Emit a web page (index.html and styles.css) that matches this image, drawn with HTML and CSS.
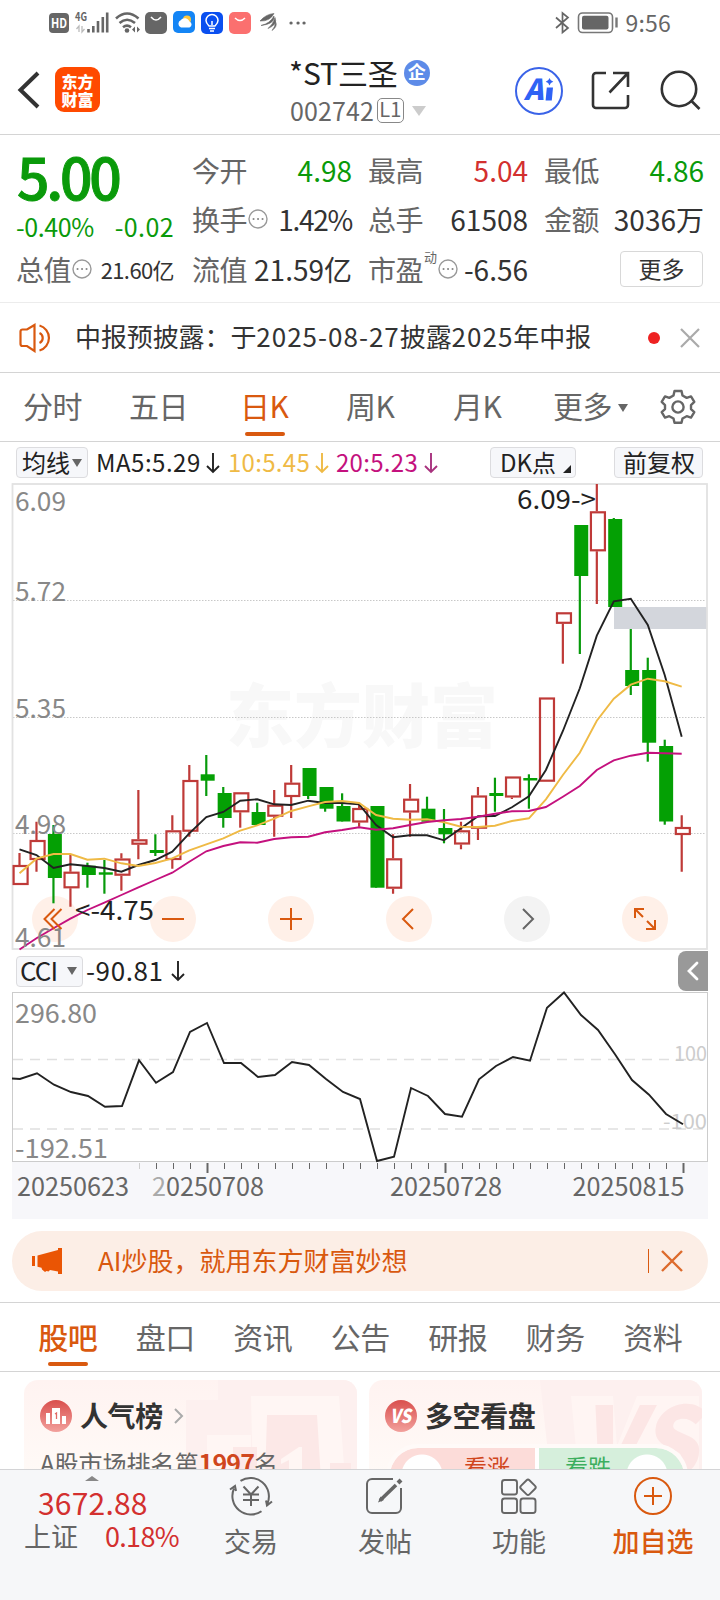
FILE: index.html
```html
<!DOCTYPE html>
<html lang="zh-CN">
<head>
<meta charset="utf-8">
<title>*ST三圣 002742</title>
<link rel="stylesheet" href="styles.css">
</head>
<body>
<div class="app">
  <div class="status">
    <svg class="status-icons" width="270" height="46" viewBox="48 0 270 46">
      <rect x="49" y="13" width="20" height="20" rx="4" fill="#666"/>
      <text x="51" y="28" font-size="13" font-weight="700" fill="#fff" textLength="16" lengthAdjust="spacingAndGlyphs">HD</text>
      <text x="75" y="21" font-size="12" font-weight="700" fill="#666" textLength="12" lengthAdjust="spacingAndGlyphs">4G</text>
      <path d="M79 32V26l-2.500 3M82 26v6l2.500-3" fill="none" stroke="#bbb" stroke-width="1.300"/>
      <path d="M88.500 29v3.500M93.300 26v6.500M98 21v11.500M102.800 17v15.500M107.200 12.500v20" stroke="#666" stroke-width="2.600"/>
      <path d="M116 18.500Q127 8.500 138.500 18.500M119.500 23Q127 16.500 135 23M123 27.200Q127 24 131 27.200" fill="none" stroke="#666" stroke-width="2.600"/>
      <circle cx="127" cy="30.500" r="2.300" fill="#666"/>
      <path d="M132 29.500l3-3v6zM140 29.500l-3-3v6z" fill="#666"/>
      <rect x="145" y="12" width="22" height="22" rx="5" fill="#666"/>
      <path d="M151 17q5 6 10 0" fill="none" stroke="#fff" stroke-width="1.500"/>
      <rect x="173" y="11" width="22" height="22" rx="5" fill="#1485f5"/>
      <circle cx="187" cy="19.500" r="4" fill="#ffc83d"/>
      <path d="M181 27.500a4 4 0 0 1 0-7.500 5 5 0 0 1 8.500 1.500 3.200 3.200 0 0 1 0 6z" fill="#fff"/>
      <rect x="201" y="12" width="22" height="22" rx="5" fill="#0a4ff0"/>
      <path d="M209 26q-3-3-3-5.500a6 6 0 0 1 12 0q0 2.500-3 5.500zM209 28.500h6M210 31h4M212 25v-4" fill="none" stroke="#fff" stroke-width="1.500"/>
      <rect x="229" y="12" width="22" height="22" rx="5" fill="#fb706f"/>
      <path d="M235 18q5 5 10 0" fill="none" stroke="#fff" stroke-width="1.500"/>
      <path d="M260 21q6-7 14-7.500-4 8-14 7.500zM261 25.500q9-2 13-9.500 1 8-13 9.500zM268 28.500q5-4 7-11 3 7-7 11zM272 30.500q3.500-4 3.500-9 2.500 5-3.500 9z" fill="#666" stroke="#666" stroke-width=".6"/>
      <path d="M291 23h.1M298 23h.1M304 23h.1" stroke="#666" stroke-width="3.200" stroke-linecap="round"/>
    </svg>
    <div class="status-right">
      <svg width="66" height="24" viewBox="553 11 66 24">
        <path d="M556 17.500l12 10.500-5.500 4.500V13l5.500 4.500L556 28" fill="none" stroke="#666" stroke-width="1.700"/>
        <rect x="578.500" y="13" width="34" height="19.500" rx="4" fill="none" stroke="#777" stroke-width="1.600"/>
        <rect x="582" y="15.800" width="26.500" height="13.600" rx="2" fill="#666"/>
        <path d="M616.500 17.500v10" stroke="#777" stroke-width="2.400"/>
      </svg>
      <span class="clock">9:56</span>
    </div>
  </div>

  <header class="header">
    <svg class="back" width="24" height="40" viewBox="0 0 24 40"><path d="M22 3L4.500 20 22 37" fill="none" stroke="#333" stroke-width="4"/></svg>
    <div class="logo"><span>东方</span><span>财富</span></div>
    <div class="title">
      <div class="name"><span>*ST三圣</span><b class="badge">企</b></div>
      <div class="code"><span>002742</span><span class="level">L1</span><i class="caret-light"></i></div>
    </div>
    <div class="actions">
      <svg width="48" height="48" viewBox="0 0 48 48">
        <circle cx="24" cy="24" r="23" fill="none" stroke="#3a63e8" stroke-width="2"/>
        <text class="ai" x="9" y="33" textLength="20">A</text>
        <path d="M31.800 20.500h6.200l-1.200 13h-6.200z" fill="#2f62f5"/>
        <path d="M34.500 11q.8 3 3.800 3.800-3 .8-3.800 3.800-.8-3-3.800-3.800 3-.8 3.800-3.800z" fill="#2f62f5"/>
      </svg>
      <svg width="40" height="40" viewBox="0 0 40 40" fill="none" stroke="#333" stroke-width="2.600"><path d="M15 2H5a3 3 0 0 0-3 3v29a3 3 0 0 0 3 3h29a3 3 0 0 0 3-3V24M22 2h15v14M37 2L18.500 21.500"/></svg>
      <svg width="42" height="42" viewBox="0 0 42 42" fill="none" stroke="#333" stroke-width="2.600"><circle cx="20" cy="19" r="17.200"/><path d="M32 30.500l8.500 8.500"/></svg>
    </div>
  </header>

  <section class="quote">
    <div class="last">
      <div class="price">5.00</div>
      <div class="change"><span>-0.40%</span><span class="diff">-0.02</span></div>
      <div class="cell small"><span class="k">总值<svg class="info" viewBox="0 0 20 20"><use href="#info"/></svg></span><span class="v">21.60亿</span></div>
    </div>
    <div class="grid">
      <div class="cell"><span class="k">今开</span><span class="v down">4.98</span></div>
      <div class="cell"><span class="k">最高</span><span class="v up">5.04</span></div>
      <div class="cell"><span class="k">最低</span><span class="v down">4.86</span></div>
      <div class="cell"><span class="k">换手<svg class="info" viewBox="0 0 20 20"><g id="info"><circle cx="10" cy="10" r="9" fill="none" stroke="#999" stroke-width="1.400"/><path d="M5.500 10h.1M10 10h.1M14.500 10h.1" stroke="#888" stroke-width="2" stroke-linecap="round"/></g></svg></span><span class="v tight">1.42%</span></div>
      <div class="cell"><span class="k">总手</span><span class="v">61508</span></div>
      <div class="cell"><span class="k">金额</span><span class="v">3036万</span></div>
      <div class="cell"><span class="k">流值</span><span class="v">21.59亿</span></div>
      <div class="cell"><span class="k">市盈<sup>动</sup><svg class="info" viewBox="0 0 20 20"><use href="#info"/></svg></span><span class="v">-6.56</span></div>
      <div class="cell end"><button class="more">更多</button></div>
    </div>
  </section>

  <section class="notice">
    <svg width="34" height="30" viewBox="0 0 34 30" fill="none" stroke="#d9590f" stroke-width="2.200"><path d="M1.500 8.500a2 2 0 0 1 2-2h4.500L15.500 2v26L8 23H3.500a2 2 0 0 1-2-2zM20.500 10a5.500 5.500 0 0 1 0 10M20.500 2.500a13 13 0 0 1 0 25"/></svg>
    <p>中报预披露：于<span class="num">2025-08-27</span>披露<span class="num">2025</span>年中报</p>
    <i class="dot"></i>
    <svg width="20" height="20" viewBox="0 0 20 20"><path d="M1 1l18 18M19 1L1 19" stroke="#aaa" stroke-width="2.200"/></svg>
  </section>

  <nav class="periods">
    <span class="p1">分时</span><span class="p2">五日</span><span class="p3 on">日K</span><span class="p4">周K</span><span class="p5">月K</span><span class="p6">更多<i class="caret"></i></span>
    <svg width="36" height="36" viewBox="-18 -18 36 36" fill="none" stroke="#666" stroke-width="2.400" stroke-linejoin="round"><circle r="5.600"/><path d="M-3.500-16h7l1 4.500 4.200 2.400 4.300-1.500 3.300 5.500-3.300 3.200v4l3.300 3-3.300 5.500-4.300-1.400-4.200 2.300-1 4.300h-7l-1-4.300-4.200-2.300-4.300 1.400-3.300-5.500 3.300-3v-4l-3.300-3.200 3.300-5.500 4.300 1.500 4.200-2.400z"/></svg>
  </nav>

  <div class="ma">
    <span class="pill ma-type">均线<i class="caret"></i></span>
    <span class="ma5">MA5:5.29</span><svg class="arrow a5" viewBox="0 0 14 22"><path d="M7 1v19M1 14l6 6 6-6"/></svg>
    <span class="ma10">10:5.45</span><svg class="arrow a10" viewBox="0 0 14 22"><path d="M7 1v19M1 14l6 6 6-6"/></svg>
    <span class="ma20">20:5.23</span><svg class="arrow a20" viewBox="0 0 14 22"><path d="M7 1v19M1 14l6 6 6-6"/></svg>
    <span class="pill dk">DK点<i class="corner"></i></span>
    <span class="pill fq">前复权</span>
  </div>

  <svg id="kline" class="kline" width="720" height="468" viewBox="0 483 720 468"></svg>

  <div class="cci-bar">
    <span class="pill">CCI<i class="caret"></i></span>
    <span class="cci-value">-90.81</span><svg class="arrow" viewBox="0 0 14 22"><path d="M7 1v19M1 14l6 6 6-6"/></svg>
    <span class="fold"><svg width="12" height="20" viewBox="0 0 12 20"><path d="M10 2L2 10l8 8" fill="none" stroke="#fff" stroke-width="2.800" stroke-linecap="round"/></svg></span>
  </div>

  <svg id="cci" class="cci" width="720" height="229" viewBox="0 991 720 229"></svg>

  <div class="banner">
    <svg width="32" height="28" viewBox="0 0 32 28" fill="#ea5504"><path d="M1 9h3v10H1zM6.500 8.500L27 3V1h4v26h-4v-2.500l-8-1.500-1.500 1.500-2-.5-1.500 1-3-2.500-.5-1.700-4-1z"/></svg>
    <p>AI炒股，就用东方财富妙想</p>
    <i class="bar"></i>
    <svg width="22" height="22" viewBox="0 0 22 22"><path d="M1 1l20 20M21 1L1 21" stroke="#dd6a2c" stroke-width="2.400"/></svg>
  </div>

  <nav class="sections">
    <span class="on">股吧</span><span>盘口</span><span>资讯</span><span>公告</span><span>研报</span><span>财务</span><span>资料</span>
  </nav>

  <main class="cards">
    <article class="card">
      <svg class="deco" width="333" height="100" viewBox="0 0 333 100">
        <path d="M194 0h139v100H162V20h32z" fill="#fdf0ef"/><path d="M227 16h88l6 84h-92z" fill="#fff6f4"/><path d="M183 55h44v45h-44z" fill="#fff6f4"/>
        <path d="M243 35h50l4 65h-56z" fill="#fce8e7"/><path d="M209 67h24v33h-24zM306 83h21v17h-21z" fill="#fce8e7"/><path d="M257 79l18-12h3v33h-13V80l-8 4z" fill="#fff6f4"/>
      </svg>
      <div class="card-head">
        <svg width="32" height="32" viewBox="0 0 32 32"><circle cx="16" cy="16" r="16" fill="url(#red)"/><path d="M6 13h4v11H6zM12 8h8v16h-8zM22 16h4v8h-4z" fill="#fff"/><path d="M15 14l1.500-1v6" stroke="#e06a66" fill="none" stroke-width="1.300"/></svg>
        <h3>人气榜</h3>
        <svg width="10" height="16" viewBox="0 0 10 16"><path d="M1 1l7 7-7 7" fill="none" stroke="#aaa" stroke-width="2"/></svg>
      </div>
      <p class="rank">A股市场排名第<b>1997</b>名</p>
    </article>
    <article class="card">
      <svg class="deco" width="333" height="100" viewBox="0 0 333 100">
        <defs><linearGradient id="red" x2="0" y2="1"><stop stop-color="#d94f4d"/><stop offset="1" stop-color="#f2a09c"/></linearGradient></defs>
        <path d="M171 0h162v100H182z" fill="#fdf0ef"/>
        <path d="M202 16h42l4 50 20-50h62v84H210z" fill="#fff5f3"/>
        <text class="vs-bg" x="210" y="98" textLength="118" lengthAdjust="spacingAndGlyphs">VS</text>
      </svg>
      <div class="card-head">
        <svg width="32" height="32" viewBox="0 0 32 32"><circle cx="16" cy="16" r="16" fill="url(#red)"/><text class="vs" x="5" y="23" textLength="21" lengthAdjust="spacingAndGlyphs">VS</text></svg>
        <h3>多空看盘</h3>
      </div>
      <div class="vote"><span class="bull">看涨</span><span class="bear">看跌</span></div>
    </article>
  </main>

  <footer class="tabbar">
    <div class="index">
      <i class="caret-up"></i>
      <div class="points">3672.88</div>
      <div class="index-row"><span>上证</span><span class="up">0.18%</span></div>
    </div>
    <div class="tab"><svg width="44" height="40" viewBox="-22 -20 44 40" fill="none" stroke="#666" stroke-width="2"><path d="M-10.500-15.200A18.500 18.500 0 0 1 16.500 7.500M10.500 15.200A18.500 18.500 0 0 1-17-7.500M-21-6.500l5-3.500 1 5M21 5.500l-5 4-1-5M-7.500-9.500l7.500 8 7.500-8M0-1.500V10M-8-1.500H8M-8 4H8"/></svg><span>交易</span></div>
    <div class="tab"><svg width="40" height="40" viewBox="0 0 40 40" fill="none" stroke="#666" stroke-width="2"><path d="M28 3H7a5 5 0 0 0-5 5v24a5 5 0 0 0 5 5h24a5 5 0 0 0 5-5V12"/><path d="M15 24.500l16-15.500" stroke-width="3.600"/><path d="M33 7l3-3" stroke-width="4"/><path d="M15.500 20.500l-2.500 6 6-2.500z" fill="#666" stroke="none"/></svg><span>发帖</span></div>
    <div class="tab"><svg width="40" height="40" viewBox="0 0 40 40" fill="none" stroke="#666" stroke-width="1.900"><rect x="3" y="4" width="15" height="14.500" rx="2.500"/><rect x="3" y="22.500" width="15" height="14.500" rx="2.500"/><rect x="21.500" y="22.500" width="15" height="14.500" rx="2.500"/><rect x="23" y="5.300" width="12" height="12" rx="2" transform="rotate(45 29 11.300)"/></svg><span>功能</span></div>
    <div class="tab add"><svg width="40" height="40" viewBox="0 0 40 40" fill="none" stroke="#d9590f" stroke-width="2"><circle cx="20" cy="20" r="18"/><path d="M11 20h18M20 11v18"/></svg><span>加自选</span></div>
  </footer>
</div>
<script src="chart.js"></script>
</body>
</html>
```
FILE: styles.css
```css
* { box-sizing: border-box; }
body, p, h3 { margin: 0; }
body { width: 720px; height: 1600px; overflow: hidden; background: #fff; color: #333; font-family: "Noto Sans CJK SC", sans-serif; }
svg { display: block; flex: none; }
i, b.badge { font-style: normal; }
.app { display: flex; flex-direction: column; width: 720px; height: 1600px; overflow: hidden; }
.app > * { flex: none; }
.up { color: #d3302f; }
.down { color: #0a9a0a; }

.status { display: flex; justify-content: space-between; height: 46px; padding: 0 49px 0 48px; }
.status-right { display: flex; align-items: center; gap: 7px; height: 46px; }
.clock { margin-top: -2px; font-size: 23px; line-height: 42px; color: #666; letter-spacing: 0.200px; }

.header { display: flex; align-items: flex-start; height: 89px; padding: 0 19px 0 16px; border-bottom: 1px solid #d4d4d4; }
.back { margin-top: 24px; }
.logo { display: flex; flex-direction: column; align-items: center; justify-content: center; width: 45px; height: 45px; margin: 21px 0 0 15px; border-radius: 9px; background: #ff4a00; color: #fff; font-size: 16px; font-weight: 900; line-height: 18px; }
.title { flex: 1; padding: 8px 0 0 189px; }
.name, .code { display: flex; align-items: center; }
.name { height: 36px; font-size: 30px; line-height: 34px; letter-spacing: -0.100px; color: #222; white-space: nowrap; }
.name span { margin-top: -1px; }
.badge { width: 26px; height: 26px; margin: 1px 0 0 6px; border-radius: 50%; background: #5d8be8; color: #fff; font-size: 18px; line-height: 23px; text-align: center; letter-spacing: 0; }
.code { height: 42px; padding-left: 1px; font-size: 25px; line-height: 36px; letter-spacing: 0.100px; color: #666; }
.code > span:first-child { margin-top: -2px; }
.level { width: 27px; height: 25px; margin: -1px 0 0 3px; border: 1.500px solid #888; border-radius: 5px; font-size: 20px; line-height: 20px; text-align: center; }
.caret-light { margin-left: 8px; border: 7px solid transparent; border-top: 10px solid #ccc; border-bottom: 0; }
.actions { display: flex; align-items: center; gap: 28px; height: 90px; }
.ai { font-size: 29px; font-weight: 900; font-style: italic; fill: #2f62f5; }

.quote { display: flex; height: 168px; padding: 0 16px; border-bottom: 1px solid #ececec; }
.last { width: 159px; }
.price { height: 78px; padding-left: 1px; font-size: 57px; line-height: 80px; font-weight: 500; letter-spacing: -3.200px; color: #0a9a0a; -webkit-text-stroke: 1px #0a9a0a; }
.change { display: flex; justify-content: space-between; height: 26px; font-size: 25px; line-height: 27px; letter-spacing: -0.400px; color: #0a9a0a; }
.diff { letter-spacing: 0.400px; }
.grid { display: grid; grid-template-columns: repeat(3, 160px); grid-auto-rows: 49.500px; column-gap: 16px; padding: 10px 0 0 18px; }
.cell { display: flex; align-items: center; justify-content: space-between; font-size: 28px; line-height: 36px; white-space: nowrap; }
.cell.end { justify-content: flex-end; margin-right: 1px; }
.small { height: 59px; }
.small .v { font-size: 22px; line-height: 28px; letter-spacing: -0.600px; }
.k { display: flex; align-items: center; color: #666; letter-spacing: -0.500px; }
.tight { letter-spacing: -1.300px; }
.info { width: 20px; height: 20px; margin-left: 1px; }
sup { align-self: flex-start; margin: -2px -3px 0 1px; font-size: 13px; line-height: 16px; }
sup + .info { margin-left: 4px; }
.more { width: 83px; height: 36px; margin-top: 0; padding: 0 0 2px; border: 1px solid #d8d8d8; border-radius: 4px; background: #fff; color: #333; font: 23px/30px "Noto Sans CJK SC", sans-serif; }

.notice { display: flex; align-items: center; height: 70px; padding: 0 20px 2px 19px; border-bottom: 1px solid #d4d4d4; }
.notice p { flex: 1; margin-top: -1px; padding-left: 22px; font-size: 26px; line-height: 40px; letter-spacing: -0.100px; white-space: nowrap; }
.notice .num { letter-spacing: 1px; }
.dot { width: 12px; height: 12px; margin: 2px 20px 0 0; border-radius: 50%; background: #ee2222; }
.notice svg { margin-top: 2px; }

.periods { display: grid; grid-template-columns: 106px 111px 106px 107px 100px 107px 36px; align-items: center; height: 69px; padding: 0 0 0 23px; border-bottom: 1px solid #d4d4d4; font-size: 30px; line-height: 65px; color: #666; }
.periods span { position: relative; height: 68px; letter-spacing: -0.500px; }
.on { color: #d9590f; font-weight: 500; }
.periods .on { font-weight: 400; }
.on::after { content: ""; position: absolute; left: 5px; bottom: 5px; width: 40px; height: 4px; border-radius: 2px; background: #d9590f; }
.caret { display: inline-block; border: 5px solid transparent; border-top: 8px solid #666; border-bottom: 0; }
.p6 .caret { margin: 0 0 6px 6px; }

.ma { display: flex; align-items: center; height: 41px; padding: 0 16px; font-size: 24px; line-height: 32px; white-space: nowrap; color: #222; }
.ma > span:not(.pill) { margin-top: -2px; }
.pill { display: flex; align-items: center; height: 31px; padding: 0 0 2px 5px; border: 1px solid #dcdcdf; border-radius: 4px; background: #f6f7fa; color: #222; }
.ma-type { width: 72px; margin-right: 8px; }
.ma-type .caret { margin: 2px 0 0 2px; }
.arrow { width: 14px; height: 22px; fill: none; stroke: #222; stroke-width: 1.900; }
.ma5 { width: 110px; letter-spacing: 0.500px; }
.a5 { margin-right: 8px; }
.ma10 { width: 87px; color: #efba45; letter-spacing: 0.300px; }
.a10 { margin-right: 7px; stroke: #efba45; }
.ma20 { width: 88px; color: #c4117e; letter-spacing: 0.300px; }
.a20 { stroke: #a8327e; }
.dk { width: 86px; margin-left: 52px; padding-left: 9px; }
.corner { margin: 14px 0 0 7px; border: 4px solid #222; border-top-color: transparent; border-left-color: transparent; }
.fq { width: 89px; margin-left: 38px; padding-left: 8px; }

.kline .axis, .cci .axis { fill: #888; }
.kline .note { fill: #222; }
.kline .mark { font-weight: 900; fill: #f8f8f8; }
.cci .ref { fill: #ccc; font-size: 20px; }
.cci .date { fill: #666; font-size: 25px; }
.cci .faded { fill: #aaa; }

.cci-bar { display: flex; align-items: center; height: 40px; padding: 0 12px 0 16px; font-size: 26px; line-height: 32px; color: #222; }
.cci-bar .pill { width: 67px; padding-left: 3px; letter-spacing: -0.900px; }
.cci-bar .caret { margin: 2px 0 0 10px; }
.cci-value { width: 85px; margin: -3px 0 0 3px; letter-spacing: 0.600px; }
.fold { display: flex; align-items: center; justify-content: center; width: 30px; height: 40px; margin-left: auto; border-radius: 8px 0 0 8px; background: #999; }

.banner { display: flex; align-items: center; height: 60px; margin: 11px 12px; padding: 0 25px 0 19px; border-radius: 30px; background: #fceee6; }
.banner p { flex: 1; padding: 0 0 3px 35px; color: #d9590f; font-size: 26px; line-height: 34px; letter-spacing: 0; }
.bar { width: 1px; height: 24px; margin-right: 12px; background: #d9590f; }

.sections { display: grid; grid-template-columns: repeat(7, 97.500px); height: 70px; padding: 0 19px; border-top: 1px solid #d4d4d4; border-bottom: 1px solid #d4d4d4; font-size: 30px; line-height: 66px; color: #666; text-align: center; letter-spacing: -0.500px; }
.sections span { position: relative; }
.sections .on::after { left: 29px; }

.cards { display: flex; gap: 12px; height: 97px; padding: 8px 18px 0 24px; overflow: hidden; }
.card { position: relative; flex: none; width: 333px; height: 160px; padding: 20px 0 0 16px; border-radius: 14px; background: linear-gradient(#fff3f1, #fffaf7 60%); overflow: hidden; }
.deco { position: absolute; left: 0; top: 0; }
.card-head { position: relative; display: flex; align-items: center; height: 32px; }
.card h3 { margin: -3px 11px 0 8px; font-size: 28px; line-height: 32px; font-weight: 700; letter-spacing: -0.400px; }
.rank { position: relative; margin-top: 14px; font-size: 24px; line-height: 32px; color: #666; white-space: nowrap; }
.rank b { color: #d0461d; font-size: 25px; letter-spacing: -0.900px; }
.vs { font-size: 19px; font-weight: 900; font-style: italic; fill: #fff; }
.vs-bg { font-size: 98px; font-weight: 900; font-style: italic; fill: #fce6e5; }
.vote { position: relative; display: flex; gap: 4px; width: 294px; margin: 16px 0 0 5px; outline: 4px solid #fffaf8; border-radius: 28px; background: #fff; font-size: 23px; line-height: 37px; overflow: hidden; }
.vote span { width: 145px; height: 56px; }
.bull { padding-left: 74px; background: radial-gradient(circle at 32px 27px, #fff 20px, transparent 21px) #fcdcd9; color: #d0461d; }
.bear { padding-left: 26px; background: radial-gradient(circle at 108px 27px, #fff 20px, transparent 21px) #d6efdc; color: #3cae5e; }

.tabbar { display: grid; grid-template-columns: 184px repeat(4, 134px); height: 131px; border-top: 1px solid #d4d4d6; background: #f6f7f9; color: #666; }
.index { padding-left: 24px; }
.caret-up { display: block; width: 0; margin: 6px 0 0 61px; border: 7px solid transparent; border-top: 0; border-bottom: 5px solid #888; }
.points { margin: 0 0 0 14px; color: #d3302f; font-size: 30px; line-height: 42px; letter-spacing: 0.200px; }
.index-row { display: flex; gap: 27px; font-size: 27px; line-height: 32px; margin-top: -3px; }
.index-row .up { letter-spacing: -0.700px; }
.tab { display: flex; flex-direction: column; align-items: center; padding-top: 6px; font-size: 27px; line-height: 36px; }
.tab span { margin-top: 7px; }
.tab.add { color: #d9590f; font-weight: 500; }
```
FILE: chart.js
```js
// [direction, high, body top, body bottom, low] in chart pixels
const candles = [
  ['r', 853, 865, 885, 885], ['r', 821.7, 840, 860, 871.7], ['g', 825, 834, 878, 903.3], ['r', 854, 871.7, 888.3, 906.7],
  ['g', 862.7, 865.7, 875, 887.7], ['g', 860, 872.3, 874.7, 893.7], ['r', 853.3, 858.5, 875.7, 890.7], ['r', 790, 839.3, 844.7, 859.3],
  ['g', 834.3, 850, 853, 856], ['r', 815.3, 830.3, 860, 868.7], ['r', 765, 780, 831.7, 836.7], ['g', 755, 774.3, 780.7, 796],
  ['g', 787, 793, 818, 827.7], ['r', 792.3, 792.3, 812.3, 827.7], ['g', 802.7, 812, 825, 825], ['r', 790, 804.7, 816.7, 836.7],
  ['r', 765, 782.7, 797, 818], ['g', 768, 768, 796, 799], ['g', 787, 787, 808.7, 811.7], ['g', 793.3, 806, 821.5, 821.5],
  ['r', 802.7, 808, 822.5, 826.7], ['g', 806, 806, 887.7, 887.7], ['r', 834.3, 858.3, 888.7, 893.7], ['r', 784, 798.7, 812.5, 836.7],
  ['g', 796.7, 808.7, 821.7, 821.7], ['g', 809, 828, 834.3, 843.3], ['r', 821.7, 830.3, 844.5, 849.3], ['r', 787, 795.5, 828.7, 840],
  ['g', 777.7, 793, 796, 811.7], ['r', 776.5, 776.5, 797.5, 799], ['g', 774.3, 778, 780.5, 808.7], ['r', 697.5, 697.5, 781.7, 781.7],
  ['r', 612.3, 612.3, 623.8, 663.7], ['g', 525, 525, 576, 654], ['r', 484, 511.3, 551.3, 604], ['g', 518, 519, 607, 607],
  ['g', 629, 670, 686, 695], ['g', 657.7, 670, 742.7, 761.7], ['g', 739.7, 746, 821.5, 824.7], ['r', 815.3, 827, 835, 871.7]
];
const ma5 = [849.3,855,868,864.3,866,868,871.7,865,860,851.7,833.3,817,812,800.7,799.3,804.3,805,800.7,803,803,804.3,825,837.3,835.3,835.3,840.3,828.3,816.3,816,807.3,796.3,770,731,688.3,635.7,601.3,598.7,625,675,736.7];
const ma10 = [873.3,858.7,854,854,859.7,858.7,863.3,866,863,858.3,850.3,844.3,838.3,830.7,825.3,818.7,811,806.3,802,801,803,815,818.7,819.7,819.3,822.3,826.7,827,825.7,821,818.3,799.3,775,752.7,720.7,698.7,684.7,678.7,681.3,686.7];
const ma20 = [949.5,938.3,928.3,918.7,910,902.7,895,887.3,880,872.7,861.7,851.3,846,842.3,842.7,839,837.3,836.7,832.3,830,827.3,829.7,828.3,825,822,820.3,819,816.7,813.7,811.3,811,807,796.7,786,770,760.3,755.7,752.7,753.3,753.7];
const cci = [1079,1073.3,1084.7,1092,1096,1106.7,1106,1060.3,1082.7,1072,1032,1023,1063,1063,1077,1075,1062,1065,1079,1092,1099,1161,1156.7,1088,1096,1114,1116.7,1079.3,1066,1057,1060.7,1007.7,992.5,1015,1030,1054.3,1080,1094.7,1114,1124.3];

const kx = i => 19.5 + i * 16.98;
const cx = i => 20 + i * 17;
const line = (values, x, color, head = '') =>
  `<polyline points="${head}${values.map((y, i) => `${x(i).toFixed(1)},${y}`).join(' ')}" fill="none" stroke="${color}" stroke-width="1.9"/>`;
const text = (cls, x, y, width, str, size = 26) =>
  `<text class="${cls}" x="${x}" y="${y}" font-size="${size}" textLength="${width}" lengthAdjust="spacingAndGlyphs">${str}</text>`;

let k = text('mark', 226, 742, 272, '东方财富', 69);
for (const y of [600.5, 717.5, 833.5]) k += `<path d="M13 ${y}H706" stroke="#c8c8c8" stroke-dasharray="1.5 1.5"/>`;
[55, 173, 291, 409, 527, 645].forEach((x, i) => { k += `<circle cx="${x}" cy="919" r="23" fill="${i === 4 ? '#f3f3f3' : '#fff0e8'}"/>`; });
k += '<rect x="614" y="607" width="93" height="22" fill="#d3d6dc"/>';
k += '<rect x="12.5" y="484" width="694.500" height="465" fill="none" stroke="#e2e2e2" stroke-width="1.800"/>';
candles.forEach(([dir, high, top, bottom, low], i) => {
  const x = kx(i);
  if (dir === 'g') {
    k += `<path d="M${x} ${high}V${low}" stroke="#079a0b" stroke-width="2.200"/><rect x="${x - 5.6}" y="${top}" width="14" height="${bottom - top}" fill="#04a004"/>`;
  } else {
    k += `<path d="M${x} ${high}V${top}M${x} ${bottom}V${low}" stroke="#bf3a38" stroke-width="2.200"/><rect x="${x - 5.900}" y="${top + 1}" width="14" height="${bottom - top - 2}" fill="none" stroke="#bf3a38" stroke-width="2.200"/>`;
  }
});
k += line(ma5, kx, '#222') + line(ma10, kx, '#efba45') + line(ma20, kx, '#c4117e');
[['6.09', 511], ['5.72', 601], ['5.35', 717.5], ['4.98', 834], ['4.61', 947]].forEach(([s, y]) => { k += text('axis', 15, y, 51, s); });
k += text('note', 517, 509, 79, '6.09-&gt;') + text('note', 75, 920, 79, '&lt;-4.75');
k += `<g fill="none" stroke="#d9590f" stroke-width="2">
  <path d="M54.500 909l-10 10 10 10M61.500 909l-10 10 10 10M162 919h22M280 919h22M291 908v22M413 909l-10 10 10 10"/>
  <path d="M523 909l10 10-10 10" stroke="#666"/>
  <path d="M635 918v-9h9M635 909l8 8M655 920v9h-9M655 929l-8-8"/></g>`;
document.getElementById('kline').innerHTML = k;

let c = '<rect x="12" y="1162" width="696" height="57" fill="#f7f7fa"/><rect x="12.500" y="992.500" width="695" height="169" fill="#fff" stroke="#ccc"/>';
for (const y of [1059.5, 1129]) c += `<path d="M13 ${y}H706" stroke="#e0e0e0" stroke-width="1.700" stroke-dasharray="10 7"/>`;
c += text('ref', 674, 1060.5, 33, '100', 20) + text('ref', 663, 1129, 44, '-100', 20);
c += line(cci, cx, '#222', '12,1078.5 ');
c += text('axis', 15, 1022.5, 82, '296.80') + text('axis', 15, 1158, 93, '-192.51');
for (let i = 7; i < 40; i++) {
  const major = i === 11 || i === 25 || i === 39;
  c += `<path d="M${cx(i) + 0.5} 1163v${major ? 10 : 6}" stroke="${i === 7 ? '#ccc' : '#666'}" stroke-width="${major ? 2 : 1}"/>`;
}
[['20250623', 17], ['<tspan class="faded">2</tspan>0250708', 152], ['20250728', 390], ['20250815', 572.5]].forEach(([s, x]) => { c += text('date', x, 1196, 112, s, 25); });
document.getElementById('cci').innerHTML = c;
```
